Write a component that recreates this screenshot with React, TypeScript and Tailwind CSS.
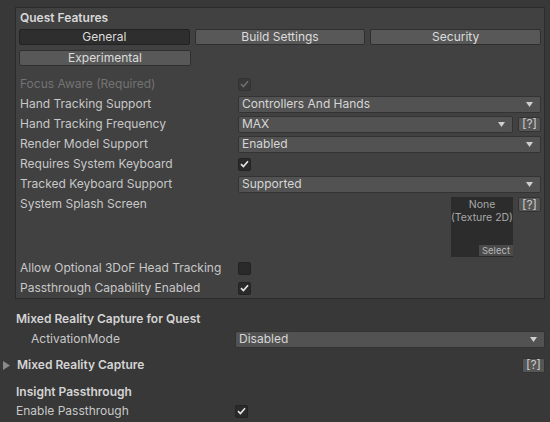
import React from "react";

function Check({ on, dim }: { on?: boolean; dim?: boolean }) {
  return (
    <div
      className={`flex h-[13px] w-[13px] items-center justify-center rounded-[2px] border ${
        dim ? "border-[#333] bg-[#393939]" : "border-[#232323] bg-[#2a2a2a]"
      }`}
    >
      {on ? (
        <svg width="9" height="8" viewBox="0 0 9 8">
          <path
            d="M1 4.2 L3.4 6.5 L8 1.2"
            fill="none"
            stroke={dim ? "#6e6e6e" : "#e8e8e8"}
            strokeWidth="1.6"
          />
        </svg>
      ) : null}
    </div>
  );
}

function Dropdown({ value, className = "" }: { value: string; className?: string }) {
  return (
    <div
      className={`flex h-[17px] items-center justify-between rounded-[2px] border border-[#333] bg-[#525252] pl-[3px] pr-[7px] text-[#d6d6d6] ${className}`}
    >
      <span>{value}</span>
      <svg width="7" height="5" viewBox="0 0 7 5">
        <path d="M0 0 H7 L3.5 5 Z" fill="#cfcfcf" />
      </svg>
    </div>
  );
}

function Help() {
  return (
    <div className="flex h-[15px] w-[23px] items-center justify-center rounded-[2px] border border-[#333] bg-[#565656] text-[12px] text-[#cacaca]">
      [?]
    </div>
  );
}

function Row({ label, children, dim }: { label: string; children?: React.ReactNode; dim?: boolean }) {
  return (
    <div className="flex h-[20px] items-center">
      <div className={`w-[218px] shrink-0 ${dim ? "text-[#737373]" : "text-[#c8c8c8]"}`}>{label}</div>
      <div className="flex flex-1 items-center gap-[5px]">{children}</div>
    </div>
  );
}

function Tab({ label, active }: { label: string; active?: boolean }) {
  return (
    <div
      className={`flex h-[16px] flex-1 items-center justify-center rounded-[2px] border text-[#dcdcdc] ${
        active ? "border-[#222] bg-[#2e2e2e]" : "border-[#2f2f2f] bg-[#585858]"
      }`}
    >
      {label}
    </div>
  );
}

export default function App() {
  return (
    <div
      className="h-[422px] w-[550px] overflow-hidden bg-[#383838] pt-[7px] text-[12px] leading-none"
      style={{ fontFamily: "Inter, 'Noto Sans', sans-serif" }}
    >
      <div className="ml-[15px] mr-[5px] border border-[#2b2b2b] bg-[#414141] px-[3px]">
        <div className="flex h-[19px] items-center pl-[1px] font-semibold text-[#d8d8d8]">Quest Features</div>
        <div className="mt-[2px] flex gap-[5px]">
          <Tab label="General" active />
          <Tab label="Build Settings" />
          <Tab label="Security" />
        </div>
        <div className="mt-[5px] flex gap-[5px]">
          <Tab label="Experimental" />
          <div className="flex-1" />
          <div className="flex-1" />
        </div>
        <div className="mt-[8px] pl-[1px]">
          <Row label="Focus Aware (Required)" dim>
            <Check on dim />
          </Row>
          <Row label="Hand Tracking Support">
            <Dropdown value="Controllers And Hands" className="flex-1" />
          </Row>
          <Row label="Hand Tracking Frequency">
            <Dropdown value="MAX" className="flex-1" />
            <Help />
          </Row>
          <Row label="Render Model Support">
            <Dropdown value="Enabled" className="flex-1" />
          </Row>
          <Row label="Requires System Keyboard">
            <Check on />
          </Row>
          <Row label="Tracked Keyboard Support">
            <Dropdown value="Supported" className="flex-1" />
          </Row>
          <div className="flex h-[64px]">
            <div className="flex h-[20px] w-[218px] items-center text-[#c8c8c8]">System Splash Screen</div>
            <div className="flex flex-1 justify-end gap-[5px] pt-[3px]">
              <div className="relative h-[60px] w-[62px] bg-[#2c2c2c] text-center text-[10.5px] leading-[13px] text-[#a8a8a8]">
                <div className="pt-[1px]">None</div>
                <div>(Texture 2D)</div>
                <div className="absolute bottom-[1px] right-0 bg-[#4a4a4a] px-[3px] text-[9.5px] leading-[11px] text-[#b8b8b8]">
                  Select
                </div>
              </div>
              <Help />
            </div>
          </div>
          <Row label="Allow Optional 3DoF Head Tracking">
            <Check />
          </Row>
          <Row label="Passthrough Capability Enabled">
            <Check on />
          </Row>
        </div>
      </div>

      <div className="mt-[10px] pl-[16px] pr-[5px]">
        <div className="flex h-[20px] items-center font-semibold text-[#d4d4d4]">Mixed Reality Capture for Quest</div>
        <div className="flex h-[20px] items-center">
          <div className="w-[219px] shrink-0 pl-[15px] text-[#c8c8c8]">ActivationMode</div>
          <Dropdown value="Disabled" className="flex-1" />
        </div>
      </div>

      <div className="mt-[6px] flex h-[20px] items-center pl-[3px] pr-[5px]">
        <svg width="7" height="9" viewBox="0 0 7 9" className="mr-[7px]">
          <path d="M0 0 L7 4.5 L0 9 Z" fill="#8a8a8a" />
        </svg>
        <div className="flex-1 font-semibold text-[#d4d4d4]">Mixed Reality Capture</div>
        <Help />
      </div>

      <div className="mt-[8px] pl-[16px]">
        <div className="flex h-[18px] items-center font-semibold text-[#d4d4d4]">Insight Passthrough</div>
        <div className="flex h-[20px] items-center">
          <div className="w-[219px] shrink-0 text-[#c8c8c8]">Enable Passthrough</div>
          <Check on />
        </div>
      </div>
    </div>
  );
}
